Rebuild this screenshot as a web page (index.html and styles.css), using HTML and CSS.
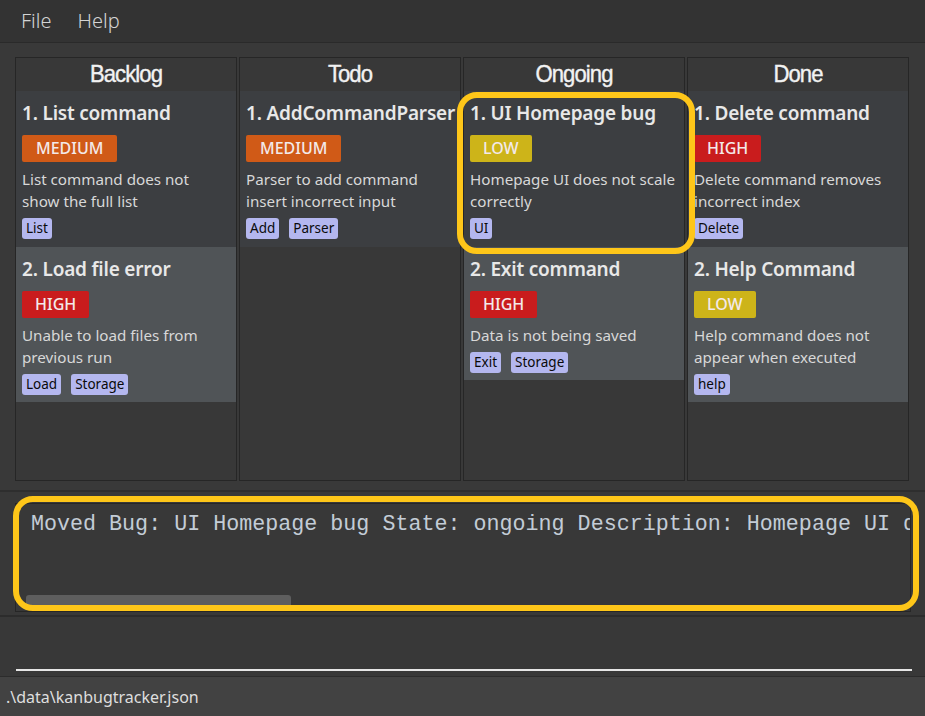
FILE: index.html
```html
<!DOCTYPE html>
<html>
<head>
<meta charset="utf-8">
<link rel="stylesheet" href="styles.css">
</head>
<body>
<div class="app">
  <nav class="menubar">
    <span class="menu-item">File</span>
    <span class="menu-item">Help</span>
  </nav>
  <main class="board">
    <section class="column">
      <h2 class="col-title">Backlog</h2>
      <div class="card card-a">
        <h3 class="card-title">1. List command</h3>
        <span class="badge medium">MEDIUM</span>
        <p class="desc">List command does not<br>show the full list</p>
        <div class="tags"><span class="tag">List</span></div>
      </div>
      <div class="card card-b">
        <h3 class="card-title">2. Load file error</h3>
        <span class="badge high">HIGH</span>
        <p class="desc">Unable to load files from<br>previous run</p>
        <div class="tags"><span class="tag">Load</span><span class="tag">Storage</span></div>
      </div>
    </section>
    <section class="column">
      <h2 class="col-title">Todo</h2>
      <div class="card card-a">
        <h3 class="card-title">1. AddCommandParser</h3>
        <span class="badge medium">MEDIUM</span>
        <p class="desc">Parser to add command<br>insert incorrect input</p>
        <div class="tags"><span class="tag">Add</span><span class="tag">Parser</span></div>
      </div>
    </section>
    <section class="column column-top">
      <h2 class="col-title">Ongoing</h2>
      <div class="card card-a highlighted">
        <h3 class="card-title">1. UI Homepage bug</h3>
        <span class="badge low">LOW</span>
        <p class="desc">Homepage UI does not scale<br>correctly</p>
        <div class="tags"><span class="tag">UI</span></div>
        <div class="ring ring-card"></div>
      </div>
      <div class="card card-b">
        <h3 class="card-title">2. Exit command</h3>
        <span class="badge high">HIGH</span>
        <p class="desc">Data is not being saved</p>
        <div class="tags"><span class="tag">Exit</span><span class="tag">Storage</span></div>
      </div>
    </section>
    <section class="column">
      <h2 class="col-title">Done</h2>
      <div class="card card-a">
        <h3 class="card-title">1. Delete command</h3>
        <span class="badge high">HIGH</span>
        <p class="desc">Delete command removes<br>incorrect index</p>
        <div class="tags"><span class="tag">Delete</span></div>
      </div>
      <div class="card card-b">
        <h3 class="card-title">2. Help Command</h3>
        <span class="badge low">LOW</span>
        <p class="desc">Help command does not<br>appear when executed</p>
        <div class="tags"><span class="tag">help</span></div>
      </div>
    </section>
  </main>
  <section class="result-area">
    <div class="result-box">
      <div class="result-text">Moved Bug: UI Homepage bug State: ongoing Description: Homepage UI does not scale correctly Tags: [UI]</div>
      <div class="scroll-thumb"></div>
    </div>
    <div class="ring ring-result"></div>
  </section>
  <section class="command-area">
    <div class="command-input"></div>
  </section>
  <footer class="statusbar">.\data\kanbugtracker.json</footer>
</div>
</body>
</html>
```
FILE: styles.css
```css
* { box-sizing: border-box; }
html, body { margin: 0; padding: 0; }
body {
  background: #383838;
  font-family: "Noto Sans", "Open Sans", sans-serif;
  width: 925px;
  height: 716px;
  overflow: hidden;
}
.app {
  display: flex;
  flex-direction: column;
  height: 716px;
}
.menubar {
  height: 43px;
  background: #333333;
  border-bottom: 1px solid #2a2a2a;
  display: flex;
  align-items: center;
  gap: 26px;
  padding: 0 0 2px 21px;
}
.menu-item {
  color: #d4d4d4;
  font-size: 20px;
  font-weight: 300;
}
.board {
  height: 449px;
  padding: 14px 16px 0 15px;
  display: grid;
  grid-template-columns: repeat(4, 222px);
  column-gap: 2px;
  border-bottom: 2px solid #2e2e2e;
  background: #393939;
}
.column {
  position: relative;
  height: 424px;
  background: #383838;
  border: 1px solid #262626;
  display: flex;
  flex-direction: column;
}
.column-top { z-index: 2; }
.col-title {
  margin: 0;
  height: 33px;
  line-height: 32px;
  text-align: center;
  font-family: "Liberation Sans", Arial, sans-serif;
  font-weight: 400;
  font-size: 24px;
  letter-spacing: -1px;
  color: #f2f2f2;
  transform: scaleX(0.92);
  -webkit-text-stroke: 0.4px #f2f2f2;
}
.card {
  position: relative;
  padding: 9px 6px 7px 6px;
  display: flex;
  flex-direction: column;
  align-items: flex-start;
}
.card-a { background: #3c3e41; height: 156px; }
.card-b { background: #505457; }
.card-title {
  margin: 0;
  font-size: 19px;
  line-height: 26px;
  font-weight: 600;
  color: #e8e8e8;
  white-space: nowrap;
  letter-spacing: -0.2px;
}
.badge {
  margin-top: 9px;
  height: 27px;
  line-height: 27px;
  padding: 0 14px;
  border-radius: 2px;
  font-size: 16px;
  font-weight: 500;
  color: #f3e9e9;
}
.badge.medium { background: #d05a17; }
.badge.high { background: #c91c1d; padding: 0 13px; }
.badge.low { background: #cdb419; padding: 0 13px; }
.desc {
  margin: 6px 0 0 0;
  font-size: 15.2px;
  line-height: 22px;
  color: #d8d8d8;
  white-space: nowrap;
}
.tags {
  margin-top: 6px;
  display: flex;
  gap: 10px;
}
.tag {
  height: 21px;
  line-height: 21px;
  padding: 0 4px;
  background: #b4b7ef;
  color: #0a0a0a;
  border-radius: 3px;
  font-size: 13.5px;
}
.ring {
  position: absolute;
  border: 6px solid #fec619;
  pointer-events: none;
  z-index: 5;
}
.ring-card {
  left: -7px;
  top: 1px;
  width: 238px;
  height: 162px;
  border-radius: 20px;
}
.result-area {
  position: relative;
  height: 125px;
  padding: 11px 15px 0 15px;
  border-bottom: 2px solid #2c2c2c;
}
.result-box {
  position: relative;
  height: 109px;
  width: 896px;
  border: 1px solid #262626;
  background: #383838;
  overflow: hidden;
}
.result-text {
  padding: 7px 0 0 15px;
  font-family: "Liberation Mono", "Courier New", monospace;
  font-size: 21.7px;
  line-height: 28px;
  color: #c3ccd6;
  white-space: nowrap;
}
.scroll-thumb {
  position: absolute;
  left: 10px;
  bottom: 5px;
  width: 265px;
  height: 11px;
  background: #5e5e5e;
  border-radius: 3px 3px 0 0;
}
.ring-result {
  left: 13px;
  top: 4px;
  width: 906px;
  height: 115px;
  border-radius: 20px;
}
.command-area {
  height: 60px;
  padding: 0 13px 0 16px;
  display: flex;
  align-items: flex-end;
  border-bottom: 1px solid #2c2c2c;
}
.command-input {
  width: 100%;
  height: 7px;
  border-top: 2px solid #e6e6e6;
}
.statusbar {
  flex: 1;
  background: #424242;
  color: #dedede;
  font-size: 16px;
  padding: 9px 0 0 6px;
}
```
